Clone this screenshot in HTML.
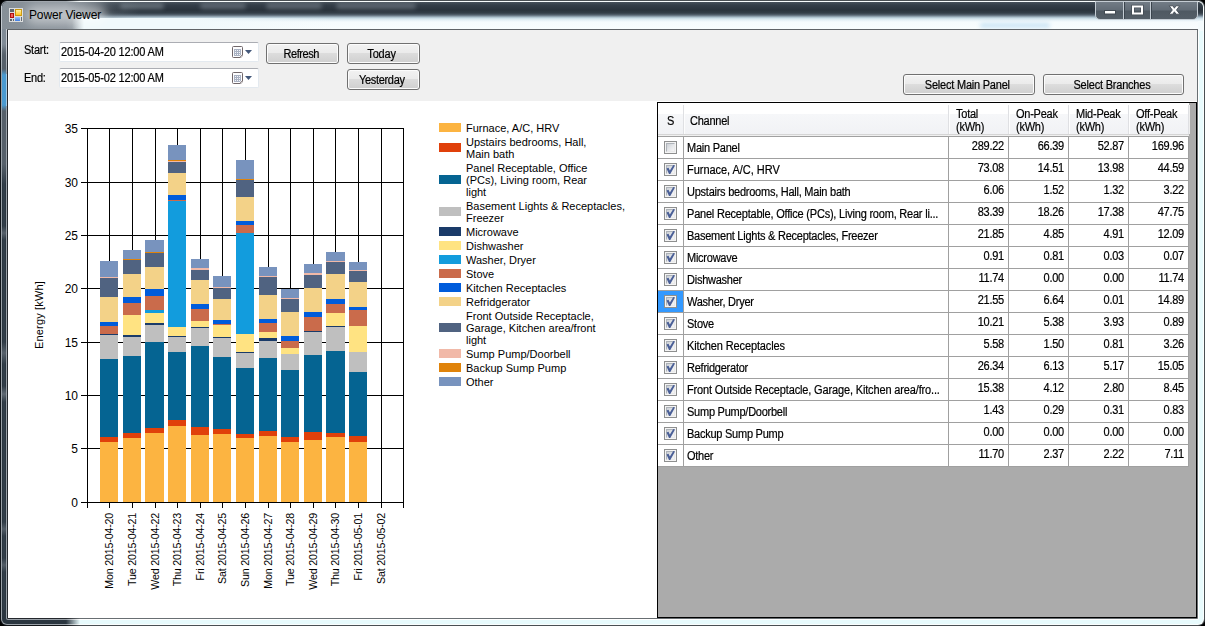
<!DOCTYPE html>
<html><head><meta charset="utf-8"><title>Power Viewer</title>
<style>
html,body{margin:0;padding:0}
body{width:1205px;height:626px;position:relative;overflow:hidden;background:#000;font-family:"Liberation Sans",sans-serif;font-size:11px;color:#000}
.a{position:absolute}
.t{position:absolute;white-space:nowrap;line-height:13px;font-size:11px;letter-spacing:-0.25px}
.g{position:absolute;white-space:nowrap;line-height:13px;font-size:12px;letter-spacing:-0.27px;transform:scaleX(.917);transform-origin:0 50%;-webkit-text-stroke:0.2px #000}
.btn{position:absolute;box-sizing:border-box;border:1px solid #707070;border-radius:3px;background:linear-gradient(#f2f2f2 0,#ebebeb 8.5px,#dddddd 9px,#cfcfcf 100%);box-shadow:inset 0 0 0 1px #fcfcfc;text-align:center;height:21px}
.btn span{display:inline-block;position:relative;left:-1.5px;top:1px;font-size:12px;letter-spacing:-0.5px;line-height:19px;transform:scaleX(.917);transform-origin:50% 50%;-webkit-text-stroke:0.2px #000}
.dp{position:absolute;box-sizing:border-box;width:200px;height:20px;background:#fff;border:1px solid #e3e9ef;border-top-color:#abadb3;border-radius:2px}
.cb{position:absolute;box-sizing:border-box;width:13px;height:13px;border:1px solid #8e8f8f;background:#f4f4f4}
.cb i{position:absolute;left:1px;top:1px;width:9px;height:9px;box-sizing:border-box;border:1px solid;border-color:#aeb3b9 #e9e9ea #e9e9ea #aeb3b9;background:linear-gradient(135deg,#cbcfd5 0%,#e4e6e9 50%,#f6f6f6 100%)}
.hl{position:absolute;background:#a0a0a0;height:1px}
.vl{position:absolute;background:#a0a0a0;width:1px}
.num{position:absolute;white-space:nowrap;font-size:12px;letter-spacing:-0.27px;line-height:13px;text-align:right;width:56px;transform:scaleX(.917);transform-origin:100% 50%;-webkit-text-stroke:0.2px #000}
</style></head><body>

<!-- window frame -->
<div class="a" style="left:0px;top:0px;width:1205px;height:626px;border-radius:7px;background:linear-gradient(90deg,#101418 0,#101418 66px,#4a5054 80px)"></div>
<div class="a" style="left:1px;top:1px;width:1203px;height:624px;border-radius:6px;background:linear-gradient(90deg,#9aa1a8 0,#9aa1a8 65px,#fafefe 79px)"></div>
<div class="a" style="left:2px;top:2px;width:1201px;height:622px;border-radius:5px;background:linear-gradient(90deg,#2a353f 0,#2a353f 64px,#e8fbfd 78px)"></div>
<div class="a" style="left:6px;top:6px;width:1193px;height:614px;border-radius:2px;background:linear-gradient(90deg,#9aa1a8 0,#9aa1a8 60px,#ffffff 74px)"></div>
<div class="a" style="left:7px;top:7px;width:1191px;height:612px;border-radius:1px;background:linear-gradient(90deg,#24282d 0,#24282d 59px,#686e72 73px)"></div>
<!-- left frame glass variations -->
<div class="a" style="left:3px;top:100px;width:2px;height:510px;background:#323e49"></div>
<div class="a" style="left:2px;top:29px;width:4px;height:45px;background:linear-gradient(rgba(128,139,150,1) 0,rgba(128,139,150,1) 18px,rgba(128,139,150,0) 45px)"></div>
<div class="a" style="left:1px;top:29px;width:1px;height:45px;background:linear-gradient(rgba(196,202,208,1) 0,rgba(196,202,208,1) 18px,rgba(196,202,208,0) 45px)"></div>
<div class="a" style="left:6px;top:29px;width:1px;height:45px;background:linear-gradient(rgba(200,204,210,1) 0,rgba(200,204,210,1) 18px,rgba(200,204,210,0) 45px)"></div>
<div class="a" style="left:2px;top:44px;width:4px;height:140px;background:linear-gradient(rgba(86,96,106,0) 0,rgba(86,96,106,1) 12px,rgba(86,96,106,1) 120px,rgba(86,96,106,0) 140px)"></div>
<div class="a" style="left:2px;top:69px;width:4px;height:42px;background:linear-gradient(rgba(74,154,208,0),#4a9ad0 14%,#4a9ad0 86%,rgba(74,154,208,0))"></div>
<div class="a" style="left:6px;top:74px;width:1px;height:32px;background:#a4cbe6"></div>
<div class="a" style="left:2px;top:226px;width:4px;height:14px;background:linear-gradient(rgba(90,100,110,0),rgba(90,100,110,.9) 50%,rgba(90,100,110,0))"></div>
<div class="a" style="left:2px;top:342px;width:4px;height:22px;background:linear-gradient(rgba(90,100,110,0),rgba(90,100,110,.9) 50%,rgba(90,100,110,0))"></div>
<div class="a" style="left:2px;top:386px;width:4px;height:16px;background:linear-gradient(rgba(100,110,120,0),rgba(100,110,120,.9) 50%,rgba(100,110,120,0))"></div>
<div class="a" style="left:2px;top:522px;width:4px;height:14px;background:linear-gradient(rgba(90,100,110,0),rgba(90,100,110,.8) 50%,rgba(90,100,110,0))"></div>
<div class="a" style="left:2px;top:558px;width:4px;height:14px;background:linear-gradient(rgba(90,100,110,0),rgba(90,100,110,.8) 50%,rgba(90,100,110,0))"></div>
<!-- title bar glass -->
<div class="a" style="left:2px;top:2px;width:1201px;height:27px;border-radius:5px 5px 0 0;overflow:hidden">
 <div class="a" style="left:-2px;top:-2px;width:1205px;height:30px;background:linear-gradient(#1d1f22 0px,#1d1f22 1px,#c4ccd3 1px,#c4ccd3 2px,#48525c 2px,#343e48 5px,#2a333c 10px,#333e48 13px,#566471 15px,#8ea0ad 16.5px,#c3d7e2 18px,#e4f0f6 20px,#f5fbfd 22px,#f9fdfe 29px)"></div>
 <div class="a" style="left:118px;top:1px;width:44px;height:6px;border-radius:3px;background:rgba(190,200,210,.35);filter:blur(2px)"></div>
 <div class="a" style="left:198px;top:1px;width:46px;height:6px;border-radius:3px;background:rgba(190,200,210,.3);filter:blur(2px)"></div>
 <div class="a" style="left:264px;top:1px;width:56px;height:6px;border-radius:3px;background:rgba(190,200,210,.3);filter:blur(2px)"></div>
 <div class="a" style="left:334px;top:1px;width:80px;height:6px;border-radius:3px;background:rgba(190,200,210,.3);filter:blur(2px)"></div>
 <div class="a" style="left:978px;top:21px;width:70px;height:5px;border-radius:3px;background:rgba(150,200,235,.45);filter:blur(2px)"></div>
 <div class="a" style="left:-2px;top:0;width:330px;height:27px;background:linear-gradient(90deg,rgba(134,143,151,1) 0px,rgba(140,148,156,1) 66px,rgba(140,149,157,.75) 84px,rgba(135,145,153,.25) 110px,rgba(135,145,153,0) 140px)"></div>
 <div class="a" style="left:70px;top:16px;width:260px;height:11px;background:linear-gradient(90deg,rgba(240,249,252,0) 0,rgba(240,249,252,1) 12px,rgba(240,249,252,1) 120px,rgba(240,249,252,0) 260px)"></div>
</div>
<div class="a" style="left:1px;top:6px;width:1px;height:24px;background:#c4cad0"></div>
<!-- right frame top part (below caption) -->
<div class="a" style="left:1198px;top:21px;width:5px;height:10px;background:#f4fbfd"></div>
<!-- client top border -->
<div class="a" style="left:7px;top:29px;width:1191px;height:1px;background:#5f6367"></div>

<!-- caption buttons -->
<div class="a" style="left:1095px;top:1px;width:103px;height:19px;box-sizing:border-box;border:1px solid #c4ccd3;border-radius:0 0 5px 5px;background:linear-gradient(#727c86 0,#626c76 8px,#4f5962 9px,#555f68 18px);overflow:hidden">
 <div class="a" style="left:27px;top:0;width:1px;height:20px;background:#c4ccd3"></div>
 <div class="a" style="left:28px;top:0;width:1px;height:20px;background:#3b444d"></div>
 <div class="a" style="left:54px;top:0;width:1px;height:20px;background:#c4ccd3"></div>
 <div class="a" style="left:55px;top:0;width:1px;height:20px;background:#3b444d"></div>
</div>
<svg class="a" style="left:1095px;top:0" width="103" height="20" viewBox="0 0 103 20">
 <rect x="9.5" y="10.5" width="11" height="3.5" fill="#fff" stroke="#434b53" stroke-width="1"/>
 <rect x="38" y="6.5" width="9" height="7" fill="none" stroke="#434b53" stroke-width="3.4"/>
 <rect x="38" y="6.5" width="9" height="7" fill="none" stroke="#fff" stroke-width="2"/>
 <path transform="translate(-0.8,0)" d="M75 5.8 L78.8 5.8 L80.2 8.2 L81.6 5.8 L85.4 5.8 L82.3 10 L85.6 14.2 L81.8 14.2 L80.2 11.8 L78.6 14.2 L74.8 14.2 L78.1 10 Z" fill="#fff" stroke="#434b53" stroke-width="0.9"/>
</svg>

<!-- app icon -->
<svg class="a" style="left:9px;top:8px" width="14" height="14" viewBox="0 0 14 14" shape-rendering="crispEdges">
 <defs><linearGradient id="gy" x1="0" y1="0" x2="0" y2="1"><stop offset="0" stop-color="#fff2a8"/><stop offset="1" stop-color="#ffc71c"/></linearGradient>
 <linearGradient id="gb" x1="0" y1="0" x2="0" y2="1"><stop offset="0" stop-color="#9cc6fa"/><stop offset="1" stop-color="#3d7be0"/></linearGradient></defs>
 <rect x="0" y="0" width="14" height="14" fill="#dcdddd"/>
 <rect x="1" y="1" width="4" height="3" fill="#5e6770"/>
 <rect x="6" y="1" width="7" height="7" fill="#c9960c"/>
 <rect x="7" y="2" width="5" height="5" fill="url(#gy)"/>
 <rect x="1" y="5" width="4" height="5" fill="#b01210"/>
 <rect x="2" y="6" width="2" height="3" fill="#f0605a"/>
 <rect x="6" y="9" width="5" height="4" fill="url(#gb)"/>
 <rect x="1" y="11" width="2" height="2" fill="#5e6770"/>
 <rect x="4" y="11" width="1" height="2" fill="#5e6770"/>
 <rect x="12" y="9" width="1" height="4" fill="#5e6770"/>
</svg>
<div class="a" style="left:26px;top:6px;width:80px;height:18px;border-radius:9px;background:rgba(255,255,255,.42);filter:blur(5px)"></div>
<div class="t" style="left:29px;top:8px;font-size:12px;line-height:14px;letter-spacing:-0.15px">Power Viewer</div>

<!-- client area -->
<div class="a" style="left:8px;top:30px;width:1189px;height:588px;background:#fff"></div>
<div class="a" style="left:8px;top:30px;width:1189px;height:71px;background:#f0f0f0"></div>
<div class="a" style="left:8px;top:30px;width:1px;height:71px;background:#fcfcfc"></div>
<div class="g" style="left:24px;top:44px">Start:</div>
<div class="g" style="left:24px;top:72px">End:</div>

<div class="dp" style="left:59px;top:42px"></div>
<div class="g" style="left:61px;top:46px;letter-spacing:-0.18px">2015-04-20 12:00 AM</div>
<svg class="a" style="left:232px;top:46px" width="22" height="13" viewBox="0 0 22 13">
 <path d="M1.5 0.5 H9.5 Q10.5 0.5 10.5 1.5 V9.5 H8.5 V11.5 H1.5 Q0.5 11.5 0.5 10.5 V1.5 Q0.5 0.5 1.5 0.5 Z" fill="#fdfdfe" stroke="#70676a" stroke-width="1"/>
 <path d="M9 10 V12 M9 10 H11" stroke="#b9b4b6" stroke-width="1" fill="none"/>
 <rect x="2" y="3" width="7" height="7" fill="#a9b1c2"/>
 <rect x="8" y="9" width="1" height="1" fill="#e4e6ec"/>
 <g fill="#f4f5f9"><rect x="3" y="4" width="1" height="1"/><rect x="5" y="4" width="1" height="1"/><rect x="7" y="4" width="1" height="1"/>
 <rect x="3" y="6" width="1" height="1"/><rect x="5" y="6" width="1" height="1"/><rect x="7" y="6" width="1" height="1"/>
 <rect x="3" y="8" width="1" height="1"/><rect x="5" y="8" width="1" height="1"/><rect x="7" y="8" width="1" height="1"/></g>
 <path d="M13 4 H20 L16.5 8 Z" fill="#44587a"/>
</svg>
<div class="dp" style="left:59px;top:68px"></div>
<div class="g" style="left:61px;top:72px;letter-spacing:-0.18px">2015-05-02 12:00 AM</div>
<svg class="a" style="left:232px;top:72px" width="22" height="13" viewBox="0 0 22 13">
 <path d="M1.5 0.5 H9.5 Q10.5 0.5 10.5 1.5 V9.5 H8.5 V11.5 H1.5 Q0.5 11.5 0.5 10.5 V1.5 Q0.5 0.5 1.5 0.5 Z" fill="#fdfdfe" stroke="#70676a" stroke-width="1"/>
 <path d="M9 10 V12 M9 10 H11" stroke="#b9b4b6" stroke-width="1" fill="none"/>
 <rect x="2" y="3" width="7" height="7" fill="#a9b1c2"/>
 <rect x="8" y="9" width="1" height="1" fill="#e4e6ec"/>
 <g fill="#f4f5f9"><rect x="3" y="4" width="1" height="1"/><rect x="5" y="4" width="1" height="1"/><rect x="7" y="4" width="1" height="1"/>
 <rect x="3" y="6" width="1" height="1"/><rect x="5" y="6" width="1" height="1"/><rect x="7" y="6" width="1" height="1"/>
 <rect x="3" y="8" width="1" height="1"/><rect x="5" y="8" width="1" height="1"/><rect x="7" y="8" width="1" height="1"/></g>
 <path d="M13 4 H20 L16.5 8 Z" fill="#44587a"/>
</svg>
<div class="btn" style="left:266px;top:43px;width:73px"><span>Refresh</span></div>
<div class="btn" style="left:347px;top:43px;width:73px"><span style="letter-spacing:-0.17px">Today</span></div>
<div class="btn" style="left:347px;top:69px;width:73px"><span style="letter-spacing:-0.36px">Yesterday</span></div>
<div class="btn" style="left:903px;top:74px;width:132px"><span style="letter-spacing:-0.24px">Select Main Panel</span></div>
<div class="btn" style="left:1043px;top:74px;width:141px"><span style="letter-spacing:-0.23px">Select Branches</span></div>
<!-- chart -->
<svg class="a" style="left:0;top:0" width="660" height="626" viewBox="0 0 660 626" shape-rendering="crispEdges">
<rect x="81" y="128" width="323" height="1" fill="#000"/>
<rect x="81" y="182" width="323" height="1" fill="#000"/>
<rect x="81" y="235" width="323" height="1" fill="#000"/>
<rect x="81" y="288" width="323" height="1" fill="#000"/>
<rect x="81" y="342" width="323" height="1" fill="#000"/>
<rect x="81" y="395" width="323" height="1" fill="#000"/>
<rect x="81" y="448" width="323" height="1" fill="#000"/>
<rect x="81" y="502" width="323" height="1" fill="#000"/>
<rect x="87" y="128" width="1" height="380" fill="#000"/>
<rect x="109" y="128" width="1" height="380" fill="#000"/>
<rect x="132" y="128" width="1" height="380" fill="#000"/>
<rect x="155" y="128" width="1" height="380" fill="#000"/>
<rect x="177" y="128" width="1" height="380" fill="#000"/>
<rect x="200" y="128" width="1" height="380" fill="#000"/>
<rect x="222" y="128" width="1" height="380" fill="#000"/>
<rect x="245" y="128" width="1" height="380" fill="#000"/>
<rect x="268" y="128" width="1" height="380" fill="#000"/>
<rect x="290" y="128" width="1" height="380" fill="#000"/>
<rect x="313" y="128" width="1" height="380" fill="#000"/>
<rect x="335" y="128" width="1" height="380" fill="#000"/>
<rect x="358" y="128" width="1" height="380" fill="#000"/>
<rect x="381" y="128" width="1" height="380" fill="#000"/>
<rect x="403" y="128" width="1" height="380" fill="#000"/>
<rect x="100" y="442" width="18" height="60" fill="#FCB441"/>
<rect x="100" y="437" width="18" height="5" fill="#E0400A"/>
<rect x="100" y="359" width="18" height="78" fill="#056492"/>
<rect x="100" y="335" width="18" height="24" fill="#BFBFBF"/>
<rect x="100" y="334" width="18" height="1" fill="#1A3B69"/>
<rect x="100" y="326" width="18" height="8" fill="#CA6B4B"/>
<rect x="100" y="322" width="18" height="4" fill="#005CDB"/>
<rect x="100" y="297" width="18" height="25" fill="#F3D288"/>
<rect x="100" y="278" width="18" height="19" fill="#506381"/>
<rect x="100" y="277" width="18" height="1" fill="#F1B9A8"/>
<rect x="100" y="261" width="18" height="16" fill="#7893BE"/>
<rect x="123" y="438" width="18" height="64" fill="#FCB441"/>
<rect x="123" y="433" width="18" height="5" fill="#E0400A"/>
<rect x="123" y="356" width="18" height="77" fill="#056492"/>
<rect x="123" y="337" width="18" height="19" fill="#BFBFBF"/>
<rect x="123" y="335" width="18" height="2" fill="#1A3B69"/>
<rect x="123" y="315" width="18" height="20" fill="#FFE382"/>
<rect x="123" y="303" width="18" height="12" fill="#CA6B4B"/>
<rect x="123" y="297" width="18" height="6" fill="#005CDB"/>
<rect x="123" y="274" width="18" height="23" fill="#F3D288"/>
<rect x="123" y="260" width="18" height="14" fill="#506381"/>
<rect x="123" y="259" width="18" height="1" fill="#E0830A"/>
<rect x="123" y="250" width="18" height="9" fill="#7893BE"/>
<rect x="145" y="433" width="19" height="69" fill="#FCB441"/>
<rect x="145" y="428" width="19" height="5" fill="#E0400A"/>
<rect x="145" y="342" width="19" height="86" fill="#056492"/>
<rect x="145" y="325" width="19" height="17" fill="#BFBFBF"/>
<rect x="145" y="323" width="19" height="2" fill="#1A3B69"/>
<rect x="145" y="313" width="19" height="10" fill="#FFE382"/>
<rect x="145" y="310" width="19" height="3" fill="#129CDD"/>
<rect x="145" y="296" width="19" height="14" fill="#CA6B4B"/>
<rect x="145" y="289" width="19" height="7" fill="#005CDB"/>
<rect x="145" y="267" width="19" height="22" fill="#F3D288"/>
<rect x="145" y="253" width="19" height="14" fill="#506381"/>
<rect x="145" y="252" width="19" height="1" fill="#E0830A"/>
<rect x="145" y="240" width="19" height="12" fill="#7893BE"/>
<rect x="168" y="426" width="18" height="76" fill="#FCB441"/>
<rect x="168" y="420" width="18" height="6" fill="#E0400A"/>
<rect x="168" y="352" width="18" height="68" fill="#056492"/>
<rect x="168" y="337" width="18" height="15" fill="#BFBFBF"/>
<rect x="168" y="336" width="18" height="1" fill="#1A3B69"/>
<rect x="168" y="327" width="18" height="9" fill="#FFE382"/>
<rect x="168" y="201" width="18" height="126" fill="#129CDD"/>
<rect x="168" y="200" width="18" height="1" fill="#CA6B4B"/>
<rect x="168" y="195" width="18" height="5" fill="#005CDB"/>
<rect x="168" y="173" width="18" height="22" fill="#F3D288"/>
<rect x="168" y="162" width="18" height="11" fill="#506381"/>
<rect x="168" y="161" width="18" height="1" fill="#F1B9A8"/>
<rect x="168" y="160" width="18" height="1" fill="#E0830A"/>
<rect x="168" y="145" width="18" height="15" fill="#7893BE"/>
<rect x="191" y="435" width="18" height="67" fill="#FCB441"/>
<rect x="191" y="427" width="18" height="8" fill="#E0400A"/>
<rect x="191" y="346" width="18" height="81" fill="#056492"/>
<rect x="191" y="328" width="18" height="18" fill="#BFBFBF"/>
<rect x="191" y="327" width="18" height="1" fill="#1A3B69"/>
<rect x="191" y="321" width="18" height="6" fill="#FFE382"/>
<rect x="191" y="309" width="18" height="12" fill="#CA6B4B"/>
<rect x="191" y="304" width="18" height="5" fill="#005CDB"/>
<rect x="191" y="280" width="18" height="24" fill="#F3D288"/>
<rect x="191" y="270" width="18" height="10" fill="#506381"/>
<rect x="191" y="268" width="18" height="2" fill="#F1B9A8"/>
<rect x="191" y="259" width="18" height="9" fill="#7893BE"/>
<rect x="213" y="434" width="18" height="68" fill="#FCB441"/>
<rect x="213" y="429" width="18" height="5" fill="#E0400A"/>
<rect x="213" y="357" width="18" height="72" fill="#056492"/>
<rect x="213" y="338" width="18" height="19" fill="#BFBFBF"/>
<rect x="213" y="337" width="18" height="1" fill="#1A3B69"/>
<rect x="213" y="325" width="18" height="12" fill="#FFE382"/>
<rect x="213" y="324" width="18" height="1" fill="#CA6B4B"/>
<rect x="213" y="320" width="18" height="4" fill="#005CDB"/>
<rect x="213" y="299" width="18" height="21" fill="#F3D288"/>
<rect x="213" y="288" width="18" height="11" fill="#506381"/>
<rect x="213" y="287" width="18" height="1" fill="#F1B9A8"/>
<rect x="213" y="276" width="18" height="11" fill="#7893BE"/>
<rect x="236" y="438" width="18" height="64" fill="#FCB441"/>
<rect x="236" y="434" width="18" height="4" fill="#E0400A"/>
<rect x="236" y="368" width="18" height="66" fill="#056492"/>
<rect x="236" y="353" width="18" height="15" fill="#BFBFBF"/>
<rect x="236" y="352" width="18" height="1" fill="#1A3B69"/>
<rect x="236" y="334" width="18" height="18" fill="#FFE382"/>
<rect x="236" y="233" width="18" height="101" fill="#129CDD"/>
<rect x="236" y="225" width="18" height="8" fill="#CA6B4B"/>
<rect x="236" y="221" width="18" height="4" fill="#005CDB"/>
<rect x="236" y="197" width="18" height="24" fill="#F3D288"/>
<rect x="236" y="180" width="18" height="17" fill="#506381"/>
<rect x="236" y="179" width="18" height="1" fill="#E0830A"/>
<rect x="236" y="160" width="18" height="19" fill="#7893BE"/>
<rect x="259" y="436" width="18" height="66" fill="#FCB441"/>
<rect x="259" y="431" width="18" height="5" fill="#E0400A"/>
<rect x="259" y="358" width="18" height="73" fill="#056492"/>
<rect x="259" y="341" width="18" height="17" fill="#BFBFBF"/>
<rect x="259" y="338" width="18" height="3" fill="#1A3B69"/>
<rect x="259" y="332" width="18" height="6" fill="#FFE382"/>
<rect x="259" y="323" width="18" height="9" fill="#CA6B4B"/>
<rect x="259" y="319" width="18" height="4" fill="#005CDB"/>
<rect x="259" y="295" width="18" height="24" fill="#F3D288"/>
<rect x="259" y="277" width="18" height="18" fill="#506381"/>
<rect x="259" y="276" width="18" height="1" fill="#F1B9A8"/>
<rect x="259" y="267" width="18" height="9" fill="#7893BE"/>
<rect x="281" y="442" width="18" height="60" fill="#FCB441"/>
<rect x="281" y="437" width="18" height="5" fill="#E0400A"/>
<rect x="281" y="370" width="18" height="67" fill="#056492"/>
<rect x="281" y="354" width="18" height="16" fill="#BFBFBF"/>
<rect x="281" y="348" width="18" height="6" fill="#FFE382"/>
<rect x="281" y="341" width="18" height="7" fill="#CA6B4B"/>
<rect x="281" y="336" width="18" height="5" fill="#005CDB"/>
<rect x="281" y="312" width="18" height="24" fill="#F3D288"/>
<rect x="281" y="299" width="18" height="13" fill="#506381"/>
<rect x="281" y="298" width="18" height="1" fill="#F1B9A8"/>
<rect x="281" y="289" width="18" height="9" fill="#7893BE"/>
<rect x="304" y="440" width="18" height="62" fill="#FCB441"/>
<rect x="304" y="432" width="18" height="8" fill="#E0400A"/>
<rect x="304" y="355" width="18" height="77" fill="#056492"/>
<rect x="304" y="332" width="18" height="23" fill="#BFBFBF"/>
<rect x="304" y="331" width="18" height="1" fill="#1A3B69"/>
<rect x="304" y="317" width="18" height="14" fill="#CA6B4B"/>
<rect x="304" y="312" width="18" height="5" fill="#005CDB"/>
<rect x="304" y="288" width="18" height="24" fill="#F3D288"/>
<rect x="304" y="275" width="18" height="13" fill="#506381"/>
<rect x="304" y="273" width="18" height="2" fill="#F1B9A8"/>
<rect x="304" y="264" width="18" height="9" fill="#7893BE"/>
<rect x="326" y="437" width="19" height="65" fill="#FCB441"/>
<rect x="326" y="433" width="19" height="4" fill="#E0400A"/>
<rect x="326" y="351" width="19" height="82" fill="#056492"/>
<rect x="326" y="327" width="19" height="24" fill="#BFBFBF"/>
<rect x="326" y="326" width="19" height="1" fill="#1A3B69"/>
<rect x="326" y="313" width="19" height="13" fill="#FFE382"/>
<rect x="326" y="304" width="19" height="9" fill="#CA6B4B"/>
<rect x="326" y="299" width="19" height="5" fill="#005CDB"/>
<rect x="326" y="274" width="19" height="25" fill="#F3D288"/>
<rect x="326" y="262" width="19" height="12" fill="#506381"/>
<rect x="326" y="261" width="19" height="1" fill="#F1B9A8"/>
<rect x="326" y="252" width="19" height="9" fill="#7893BE"/>
<rect x="349" y="442" width="18" height="60" fill="#FCB441"/>
<rect x="349" y="436" width="18" height="6" fill="#E0400A"/>
<rect x="349" y="372" width="18" height="64" fill="#056492"/>
<rect x="349" y="352" width="18" height="20" fill="#BFBFBF"/>
<rect x="349" y="326" width="18" height="26" fill="#FFE382"/>
<rect x="349" y="310" width="18" height="16" fill="#CA6B4B"/>
<rect x="349" y="307" width="18" height="3" fill="#005CDB"/>
<rect x="349" y="282" width="18" height="25" fill="#F3D288"/>
<rect x="349" y="271" width="18" height="11" fill="#506381"/>
<rect x="349" y="270" width="18" height="1" fill="#F1B9A8"/>
<rect x="349" y="262" width="18" height="8" fill="#7893BE"/>
<rect x="439" y="123" width="22" height="9" fill="#FCB441"/>
<rect x="439" y="143" width="22" height="9" fill="#E0400A"/>
<rect x="439" y="175" width="22" height="9" fill="#056492"/>
<rect x="439" y="207" width="22" height="9" fill="#BFBFBF"/>
<rect x="439" y="227" width="22" height="9" fill="#1A3B69"/>
<rect x="439" y="241" width="22" height="9" fill="#FFE382"/>
<rect x="439" y="255" width="22" height="9" fill="#129CDD"/>
<rect x="439" y="269" width="22" height="9" fill="#CA6B4B"/>
<rect x="439" y="283" width="22" height="9" fill="#005CDB"/>
<rect x="439" y="297" width="22" height="9" fill="#F3D288"/>
<rect x="439" y="323" width="22" height="9" fill="#506381"/>
<rect x="439" y="349" width="22" height="9" fill="#F1B9A8"/>
<rect x="439" y="363" width="22" height="9" fill="#E0830A"/>
<rect x="439" y="377" width="22" height="9" fill="#7893BE"/>
</svg>
<div class="t" style="left:466px;top:122px;font-size:11px;letter-spacing:0;line-height:12px">Furnace, A/C, HRV</div>
<div class="t" style="left:466px;top:136px;font-size:11px;letter-spacing:0;line-height:12px">Upstairs bedrooms, Hall,</div>
<div class="t" style="left:466px;top:148px;font-size:11px;letter-spacing:0;line-height:12px">Main bath</div>
<div class="t" style="left:466px;top:162px;font-size:11px;letter-spacing:0;line-height:12px">Panel Receptable, Office</div>
<div class="t" style="left:466px;top:174px;font-size:11px;letter-spacing:0;line-height:12px">(PCs), Living room, Rear</div>
<div class="t" style="left:466px;top:186px;font-size:11px;letter-spacing:0;line-height:12px">light</div>
<div class="t" style="left:466px;top:200px;font-size:11px;letter-spacing:0;line-height:12px">Basement Lights &amp; Receptacles,</div>
<div class="t" style="left:466px;top:212px;font-size:11px;letter-spacing:0;line-height:12px">Freezer</div>
<div class="t" style="left:466px;top:226px;font-size:11px;letter-spacing:0;line-height:12px">Microwave</div>
<div class="t" style="left:466px;top:240px;font-size:11px;letter-spacing:0;line-height:12px">Dishwasher</div>
<div class="t" style="left:466px;top:254px;font-size:11px;letter-spacing:0;line-height:12px">Washer, Dryer</div>
<div class="t" style="left:466px;top:268px;font-size:11px;letter-spacing:0;line-height:12px">Stove</div>
<div class="t" style="left:466px;top:282px;font-size:11px;letter-spacing:0;line-height:12px">Kitchen Receptacles</div>
<div class="t" style="left:466px;top:296px;font-size:11px;letter-spacing:0;line-height:12px">Refridgerator</div>
<div class="t" style="left:466px;top:310px;font-size:11px;letter-spacing:0;line-height:12px">Front Outside Receptacle,</div>
<div class="t" style="left:466px;top:322px;font-size:11px;letter-spacing:0;line-height:12px">Garage, Kitchen area/front</div>
<div class="t" style="left:466px;top:334px;font-size:11px;letter-spacing:0;line-height:12px">light</div>
<div class="t" style="left:466px;top:348px;font-size:11px;letter-spacing:0;line-height:12px">Sump Pump/Doorbell</div>
<div class="t" style="left:466px;top:362px;font-size:11px;letter-spacing:0;line-height:12px">Backup Sump Pump</div>
<div class="t" style="left:466px;top:376px;font-size:11px;letter-spacing:0;line-height:12px">Other</div>
<div class="t" style="left:38px;width:40px;text-align:right;top:122.5px;font-size:12px;letter-spacing:0;line-height:12px">35</div>
<div class="t" style="left:38px;width:40px;text-align:right;top:176.5px;font-size:12px;letter-spacing:0;line-height:12px">30</div>
<div class="t" style="left:38px;width:40px;text-align:right;top:229.5px;font-size:12px;letter-spacing:0;line-height:12px">25</div>
<div class="t" style="left:38px;width:40px;text-align:right;top:282.5px;font-size:12px;letter-spacing:0;line-height:12px">20</div>
<div class="t" style="left:38px;width:40px;text-align:right;top:336.5px;font-size:12px;letter-spacing:0;line-height:12px">15</div>
<div class="t" style="left:38px;width:40px;text-align:right;top:389.5px;font-size:12px;letter-spacing:0;line-height:12px">10</div>
<div class="t" style="left:38px;width:40px;text-align:right;top:442.5px;font-size:12px;letter-spacing:0;line-height:12px">5</div>
<div class="t" style="left:38px;width:40px;text-align:right;top:496.5px;font-size:12px;letter-spacing:0;line-height:12px">0</div>
<div class="t" style="left:38.5px;top:315px;width:0;height:0;overflow:visible"><div style="position:absolute;left:-50px;top:-6px;width:100px;text-align:center;transform:rotate(-90deg);font-size:11px;letter-spacing:0.15px;line-height:12px">Energy [kWh]</div></div>
<div class="a" style="left:109px;top:513px;width:0;height:0"><div style="position:absolute;right:0;top:-6px;white-space:nowrap;transform-origin:100% 50%;transform:rotate(-90deg) ;font-size:10.67px;letter-spacing:-0.18px;line-height:12px">Mon 2015-04-20</div></div>
<div class="a" style="left:132px;top:513px;width:0;height:0"><div style="position:absolute;right:0;top:-6px;white-space:nowrap;transform-origin:100% 50%;transform:rotate(-90deg) ;font-size:10.67px;letter-spacing:-0.18px;line-height:12px">Tue 2015-04-21</div></div>
<div class="a" style="left:155px;top:513px;width:0;height:0"><div style="position:absolute;right:0;top:-6px;white-space:nowrap;transform-origin:100% 50%;transform:rotate(-90deg) ;font-size:10.67px;letter-spacing:-0.18px;line-height:12px">Wed 2015-04-22</div></div>
<div class="a" style="left:177px;top:513px;width:0;height:0"><div style="position:absolute;right:0;top:-6px;white-space:nowrap;transform-origin:100% 50%;transform:rotate(-90deg) ;font-size:10.67px;letter-spacing:-0.18px;line-height:12px">Thu 2015-04-23</div></div>
<div class="a" style="left:200px;top:513px;width:0;height:0"><div style="position:absolute;right:0;top:-6px;white-space:nowrap;transform-origin:100% 50%;transform:rotate(-90deg) ;font-size:10.67px;letter-spacing:-0.18px;line-height:12px">Fri 2015-04-24</div></div>
<div class="a" style="left:222px;top:513px;width:0;height:0"><div style="position:absolute;right:0;top:-6px;white-space:nowrap;transform-origin:100% 50%;transform:rotate(-90deg) ;font-size:10.67px;letter-spacing:-0.18px;line-height:12px">Sat 2015-04-25</div></div>
<div class="a" style="left:245px;top:513px;width:0;height:0"><div style="position:absolute;right:0;top:-6px;white-space:nowrap;transform-origin:100% 50%;transform:rotate(-90deg) ;font-size:10.67px;letter-spacing:-0.18px;line-height:12px">Sun 2015-04-26</div></div>
<div class="a" style="left:268px;top:513px;width:0;height:0"><div style="position:absolute;right:0;top:-6px;white-space:nowrap;transform-origin:100% 50%;transform:rotate(-90deg) ;font-size:10.67px;letter-spacing:-0.18px;line-height:12px">Mon 2015-04-27</div></div>
<div class="a" style="left:290px;top:513px;width:0;height:0"><div style="position:absolute;right:0;top:-6px;white-space:nowrap;transform-origin:100% 50%;transform:rotate(-90deg) ;font-size:10.67px;letter-spacing:-0.18px;line-height:12px">Tue 2015-04-28</div></div>
<div class="a" style="left:313px;top:513px;width:0;height:0"><div style="position:absolute;right:0;top:-6px;white-space:nowrap;transform-origin:100% 50%;transform:rotate(-90deg) ;font-size:10.67px;letter-spacing:-0.18px;line-height:12px">Wed 2015-04-29</div></div>
<div class="a" style="left:335px;top:513px;width:0;height:0"><div style="position:absolute;right:0;top:-6px;white-space:nowrap;transform-origin:100% 50%;transform:rotate(-90deg) ;font-size:10.67px;letter-spacing:-0.18px;line-height:12px">Thu 2015-04-30</div></div>
<div class="a" style="left:358px;top:513px;width:0;height:0"><div style="position:absolute;right:0;top:-6px;white-space:nowrap;transform-origin:100% 50%;transform:rotate(-90deg) ;font-size:10.67px;letter-spacing:-0.18px;line-height:12px">Fri 2015-05-01</div></div>
<div class="a" style="left:381px;top:513px;width:0;height:0"><div style="position:absolute;right:0;top:-6px;white-space:nowrap;transform-origin:100% 50%;transform:rotate(-90deg) ;font-size:10.67px;letter-spacing:-0.18px;line-height:12px">Sat 2015-05-02</div></div>
<!-- data grid -->
<div class="a" style="left:657px;top:102px;width:540px;height:516px;box-sizing:border-box;border:1px solid #000;background:#ababab"></div>
<div class="a" style="left:658px;top:103px;width:531px;height:34px;background:linear-gradient(#ffffff 0,#ffffff 11px,#f6f7f9 11px,#f1f2f5 31px,#d5d5d5 31px,#d5d5d5 32px,#f0f0f0 32px,#f0f0f0 33px,#a0a0a0 33px)"></div>
<div class="a" style="left:658px;top:137px;width:531px;height:330px;background:#fff"></div>
<div class="a" style="left:683px;top:105px;width:1px;height:29px;background:#dfe0e3"></div>
<div class="a" style="left:684px;top:105px;width:1px;height:29px;background:rgba(255,255,255,.8)"></div>
<div class="vl" style="left:683px;top:136px;height:331px"></div>
<div class="a" style="left:948px;top:105px;width:1px;height:29px;background:#dfe0e3"></div>
<div class="a" style="left:949px;top:105px;width:1px;height:29px;background:rgba(255,255,255,.8)"></div>
<div class="vl" style="left:948px;top:136px;height:331px"></div>
<div class="a" style="left:1008px;top:105px;width:1px;height:29px;background:#dfe0e3"></div>
<div class="a" style="left:1009px;top:105px;width:1px;height:29px;background:rgba(255,255,255,.8)"></div>
<div class="vl" style="left:1008px;top:136px;height:331px"></div>
<div class="a" style="left:1068px;top:105px;width:1px;height:29px;background:#dfe0e3"></div>
<div class="a" style="left:1069px;top:105px;width:1px;height:29px;background:rgba(255,255,255,.8)"></div>
<div class="vl" style="left:1068px;top:136px;height:331px"></div>
<div class="a" style="left:1128px;top:105px;width:1px;height:29px;background:#dfe0e3"></div>
<div class="a" style="left:1129px;top:105px;width:1px;height:29px;background:rgba(255,255,255,.8)"></div>
<div class="vl" style="left:1128px;top:136px;height:331px"></div>
<div class="a" style="left:1188px;top:105px;width:1px;height:29px;background:#dfe0e3"></div>
<div class="a" style="left:1189px;top:105px;width:1px;height:29px;background:rgba(255,255,255,.8)"></div>
<div class="vl" style="left:1188px;top:136px;height:331px"></div>
<div class="hl" style="left:658px;top:136px;width:531px"></div>
<div class="hl" style="left:658px;top:158px;width:531px"></div>
<div class="hl" style="left:658px;top:180px;width:531px"></div>
<div class="hl" style="left:658px;top:202px;width:531px"></div>
<div class="hl" style="left:658px;top:224px;width:531px"></div>
<div class="hl" style="left:658px;top:246px;width:531px"></div>
<div class="hl" style="left:658px;top:268px;width:531px"></div>
<div class="hl" style="left:658px;top:290px;width:531px"></div>
<div class="hl" style="left:658px;top:312px;width:531px"></div>
<div class="hl" style="left:658px;top:334px;width:531px"></div>
<div class="hl" style="left:658px;top:356px;width:531px"></div>
<div class="hl" style="left:658px;top:378px;width:531px"></div>
<div class="hl" style="left:658px;top:400px;width:531px"></div>
<div class="hl" style="left:658px;top:422px;width:531px"></div>
<div class="hl" style="left:658px;top:444px;width:531px"></div>
<div class="hl" style="left:658px;top:466px;width:531px"></div>
<div class="g" style="left:666.5px;top:115px">S</div>
<div class="g" style="left:690px;top:115px">Channel</div>
<div class="g" style="left:955.5px;top:108px;line-height:13px">Total<br>(kWh)</div>
<div class="g" style="left:1015.5px;top:108px;line-height:13px">On-Peak<br>(kWh)</div>
<div class="g" style="left:1075.5px;top:108px;line-height:13px">Mid-Peak<br>(kWh)</div>
<div class="g" style="left:1135.5px;top:108px;line-height:13px">Off-Peak<br>(kWh)</div>
<div class="a" style="left:658px;top:291px;width:25px;height:21px;background:#3399ff"></div>
<div class="cb" style="left:664px;top:141px"><i></i></div>
<div class="g" style="left:687px;top:142px">Main Panel</div>
<div class="num" style="left:948px;top:140px">289.22</div>
<div class="num" style="left:1008px;top:140px">66.39</div>
<div class="num" style="left:1068px;top:140px">52.87</div>
<div class="num" style="left:1128px;top:140px">169.96</div>
<div class="cb" style="left:664px;top:163px"><i></i><svg width="11" height="11" viewBox="0 0 11 11" style="position:absolute;left:0;top:0"><path d="M1.5 4.6 L3.5 3.7 L4.85 6.6 L8.3 0.9 L10 1.5 L5.3 9.9 L4.0 9.9 Z" fill="#4a5f97"/></svg></div>
<div class="g" style="left:687px;top:164px;letter-spacing:-0.04px">Furnace, A/C, HRV</div>
<div class="num" style="left:948px;top:162px">73.08</div>
<div class="num" style="left:1008px;top:162px">14.51</div>
<div class="num" style="left:1068px;top:162px">13.98</div>
<div class="num" style="left:1128px;top:162px">44.59</div>
<div class="cb" style="left:664px;top:185px"><i></i><svg width="11" height="11" viewBox="0 0 11 11" style="position:absolute;left:0;top:0"><path d="M1.5 4.6 L3.5 3.7 L4.85 6.6 L8.3 0.9 L10 1.5 L5.3 9.9 L4.0 9.9 Z" fill="#4a5f97"/></svg></div>
<div class="g" style="left:687px;top:186px">Upstairs bedrooms, Hall, Main bath</div>
<div class="num" style="left:948px;top:184px">6.06</div>
<div class="num" style="left:1008px;top:184px">1.52</div>
<div class="num" style="left:1068px;top:184px">1.32</div>
<div class="num" style="left:1128px;top:184px">3.22</div>
<div class="cb" style="left:664px;top:207px"><i></i><svg width="11" height="11" viewBox="0 0 11 11" style="position:absolute;left:0;top:0"><path d="M1.5 4.6 L3.5 3.7 L4.85 6.6 L8.3 0.9 L10 1.5 L5.3 9.9 L4.0 9.9 Z" fill="#4a5f97"/></svg></div>
<div class="g" style="left:687px;top:208px;letter-spacing:-0.23px">Panel Receptable, Office (PCs), Living room, Rear li...</div>
<div class="num" style="left:948px;top:206px">83.39</div>
<div class="num" style="left:1008px;top:206px">18.26</div>
<div class="num" style="left:1068px;top:206px">17.38</div>
<div class="num" style="left:1128px;top:206px">47.75</div>
<div class="cb" style="left:664px;top:229px"><i></i><svg width="11" height="11" viewBox="0 0 11 11" style="position:absolute;left:0;top:0"><path d="M1.5 4.6 L3.5 3.7 L4.85 6.6 L8.3 0.9 L10 1.5 L5.3 9.9 L4.0 9.9 Z" fill="#4a5f97"/></svg></div>
<div class="g" style="left:687px;top:230px">Basement Lights &amp; Receptacles, Freezer</div>
<div class="num" style="left:948px;top:228px">21.85</div>
<div class="num" style="left:1008px;top:228px">4.85</div>
<div class="num" style="left:1068px;top:228px">4.91</div>
<div class="num" style="left:1128px;top:228px">12.09</div>
<div class="cb" style="left:664px;top:251px"><i></i><svg width="11" height="11" viewBox="0 0 11 11" style="position:absolute;left:0;top:0"><path d="M1.5 4.6 L3.5 3.7 L4.85 6.6 L8.3 0.9 L10 1.5 L5.3 9.9 L4.0 9.9 Z" fill="#4a5f97"/></svg></div>
<div class="g" style="left:687px;top:252px">Microwave</div>
<div class="num" style="left:948px;top:250px">0.91</div>
<div class="num" style="left:1008px;top:250px">0.81</div>
<div class="num" style="left:1068px;top:250px">0.03</div>
<div class="num" style="left:1128px;top:250px">0.07</div>
<div class="cb" style="left:664px;top:273px"><i></i><svg width="11" height="11" viewBox="0 0 11 11" style="position:absolute;left:0;top:0"><path d="M1.5 4.6 L3.5 3.7 L4.85 6.6 L8.3 0.9 L10 1.5 L5.3 9.9 L4.0 9.9 Z" fill="#4a5f97"/></svg></div>
<div class="g" style="left:687px;top:274px">Dishwasher</div>
<div class="num" style="left:948px;top:272px">11.74</div>
<div class="num" style="left:1008px;top:272px">0.00</div>
<div class="num" style="left:1068px;top:272px">0.00</div>
<div class="num" style="left:1128px;top:272px">11.74</div>
<div class="cb" style="left:664px;top:295px"><i></i><svg width="11" height="11" viewBox="0 0 11 11" style="position:absolute;left:0;top:0"><path d="M1.5 4.6 L3.5 3.7 L4.85 6.6 L8.3 0.9 L10 1.5 L5.3 9.9 L4.0 9.9 Z" fill="#4a5f97"/></svg></div>
<div class="g" style="left:687px;top:296px">Washer, Dryer</div>
<div class="num" style="left:948px;top:294px">21.55</div>
<div class="num" style="left:1008px;top:294px">6.64</div>
<div class="num" style="left:1068px;top:294px">0.01</div>
<div class="num" style="left:1128px;top:294px">14.89</div>
<div class="cb" style="left:664px;top:317px"><i></i><svg width="11" height="11" viewBox="0 0 11 11" style="position:absolute;left:0;top:0"><path d="M1.5 4.6 L3.5 3.7 L4.85 6.6 L8.3 0.9 L10 1.5 L5.3 9.9 L4.0 9.9 Z" fill="#4a5f97"/></svg></div>
<div class="g" style="left:687px;top:318px">Stove</div>
<div class="num" style="left:948px;top:316px">10.21</div>
<div class="num" style="left:1008px;top:316px">5.38</div>
<div class="num" style="left:1068px;top:316px">3.93</div>
<div class="num" style="left:1128px;top:316px">0.89</div>
<div class="cb" style="left:664px;top:339px"><i></i><svg width="11" height="11" viewBox="0 0 11 11" style="position:absolute;left:0;top:0"><path d="M1.5 4.6 L3.5 3.7 L4.85 6.6 L8.3 0.9 L10 1.5 L5.3 9.9 L4.0 9.9 Z" fill="#4a5f97"/></svg></div>
<div class="g" style="left:687px;top:340px;letter-spacing:-0.14px">Kitchen Receptacles</div>
<div class="num" style="left:948px;top:338px">5.58</div>
<div class="num" style="left:1008px;top:338px">1.50</div>
<div class="num" style="left:1068px;top:338px">0.81</div>
<div class="num" style="left:1128px;top:338px">3.26</div>
<div class="cb" style="left:664px;top:361px"><i></i><svg width="11" height="11" viewBox="0 0 11 11" style="position:absolute;left:0;top:0"><path d="M1.5 4.6 L3.5 3.7 L4.85 6.6 L8.3 0.9 L10 1.5 L5.3 9.9 L4.0 9.9 Z" fill="#4a5f97"/></svg></div>
<div class="g" style="left:687px;top:362px">Refridgerator</div>
<div class="num" style="left:948px;top:360px">26.34</div>
<div class="num" style="left:1008px;top:360px">6.13</div>
<div class="num" style="left:1068px;top:360px">5.17</div>
<div class="num" style="left:1128px;top:360px">15.05</div>
<div class="cb" style="left:664px;top:383px"><i></i><svg width="11" height="11" viewBox="0 0 11 11" style="position:absolute;left:0;top:0"><path d="M1.5 4.6 L3.5 3.7 L4.85 6.6 L8.3 0.9 L10 1.5 L5.3 9.9 L4.0 9.9 Z" fill="#4a5f97"/></svg></div>
<div class="g" style="left:687px;top:384px;letter-spacing:-0.16px">Front Outside Receptacle, Garage, Kitchen area/fro...</div>
<div class="num" style="left:948px;top:382px">15.38</div>
<div class="num" style="left:1008px;top:382px">4.12</div>
<div class="num" style="left:1068px;top:382px">2.80</div>
<div class="num" style="left:1128px;top:382px">8.45</div>
<div class="cb" style="left:664px;top:405px"><i></i><svg width="11" height="11" viewBox="0 0 11 11" style="position:absolute;left:0;top:0"><path d="M1.5 4.6 L3.5 3.7 L4.85 6.6 L8.3 0.9 L10 1.5 L5.3 9.9 L4.0 9.9 Z" fill="#4a5f97"/></svg></div>
<div class="g" style="left:687px;top:406px">Sump Pump/Doorbell</div>
<div class="num" style="left:948px;top:404px">1.43</div>
<div class="num" style="left:1008px;top:404px">0.29</div>
<div class="num" style="left:1068px;top:404px">0.31</div>
<div class="num" style="left:1128px;top:404px">0.83</div>
<div class="cb" style="left:664px;top:427px"><i></i><svg width="11" height="11" viewBox="0 0 11 11" style="position:absolute;left:0;top:0"><path d="M1.5 4.6 L3.5 3.7 L4.85 6.6 L8.3 0.9 L10 1.5 L5.3 9.9 L4.0 9.9 Z" fill="#4a5f97"/></svg></div>
<div class="g" style="left:687px;top:428px">Backup Sump Pump</div>
<div class="num" style="left:948px;top:426px">0.00</div>
<div class="num" style="left:1008px;top:426px">0.00</div>
<div class="num" style="left:1068px;top:426px">0.00</div>
<div class="num" style="left:1128px;top:426px">0.00</div>
<div class="cb" style="left:664px;top:449px"><i></i><svg width="11" height="11" viewBox="0 0 11 11" style="position:absolute;left:0;top:0"><path d="M1.5 4.6 L3.5 3.7 L4.85 6.6 L8.3 0.9 L10 1.5 L5.3 9.9 L4.0 9.9 Z" fill="#4a5f97"/></svg></div>
<div class="g" style="left:687px;top:450px">Other</div>
<div class="num" style="left:948px;top:448px">11.70</div>
<div class="num" style="left:1008px;top:448px">2.37</div>
<div class="num" style="left:1068px;top:448px">2.22</div>
<div class="num" style="left:1128px;top:448px">7.11</div>
</body></html>
